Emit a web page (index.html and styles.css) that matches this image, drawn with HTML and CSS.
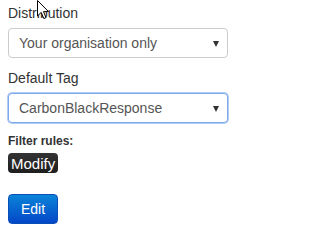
FILE: index.html
```html
<!DOCTYPE html>
<html>
<head>
<meta charset="utf-8">
<link rel="stylesheet" href="styles.css">
</head>
<body>
<div class="form">
  <label class="field-label">Distribution</label>
  <div class="select">
    <span class="select-text">Your organisation only</span>
    <span class="caret"></span>
  </div>
  <label class="field-label">Default Tag</label>
  <div class="select focused">
    <span class="select-text">CarbonBlackResponse</span>
    <span class="caret"></span>
  </div>
  <div class="filter-label">Filter rules:</div>
  <span class="btn-inverse">Modify</span>
  <div class="actions">
    <span class="btn-primary">Edit</span>
  </div>
</div>
<svg class="cursor" width="14" height="20" viewBox="0 0 14 20">
  <path d="M0.5 0.5 L0.5 16 L4.2 12.4 L6.8 18.5 L9 17.6 L6.5 11.6 L11.5 11.6 Z" fill="#fff" stroke="#000" stroke-width="1"/>
</svg>
</body>
</html>
```
FILE: styles.css
```css
html, body {
  margin: 0;
  padding: 0;
  background: #fff;
}
body {
  font-family: "Liberation Sans", Arial, Helvetica, sans-serif;
  font-size: 14px;
  line-height: 20px;
  color: #333;
  position: relative;
}
.form {
  padding: 3px 8px 0 8px;
  display: flex;
  flex-direction: column;
  align-items: flex-start;
}
.field-label {
  display: block;
  height: 20px;
  margin-bottom: 5px;
  color: #333;
}
.select {
  box-sizing: border-box;
  width: 220px;
  height: 30px;
  border: 1px solid #ccc;
  border-radius: 4px;
  margin-bottom: 10px;
  display: flex;
  align-items: center;
  justify-content: space-between;
  padding: 0 8px 0 10px;
  color: #555;
  background: #fff;
}
.select.focused {
  border-color: #7eaaea;
  box-shadow: 0 0 0 1px #b3cdf3;
}
.caret {
  width: 0;
  height: 0;
  border-left: 3.5px solid transparent;
  border-right: 3.5px solid transparent;
  border-top: 6px solid #333;
  margin-top: 1px;
}
.filter-label {
  font-size: 12px;
  font-weight: bold;
  line-height: 14px;
  margin-top: 1px;
  margin-bottom: 5px;
}
.btn-inverse {
  display: inline-block;
  background: linear-gradient(#333, #1e1e1e);
  color: #fff;
  font-size: 15px;
  line-height: 19px;
  padding: 1px 3px 0 3px;
  border-radius: 4px;
}
.actions {
  margin-top: 21px;
}
.btn-primary {
  display: inline-block;
  box-sizing: border-box;
  height: 30px;
  padding: 4px 12px;
  line-height: 20px;
  font-size: 14px;
  color: #fff;
  border: 1px solid #0a4fb8;
  border-radius: 4px;
  background: linear-gradient(#0a84d8, #0447c8);
}
.cursor {
  position: absolute;
  left: 37px;
  top: 0;
}
```
